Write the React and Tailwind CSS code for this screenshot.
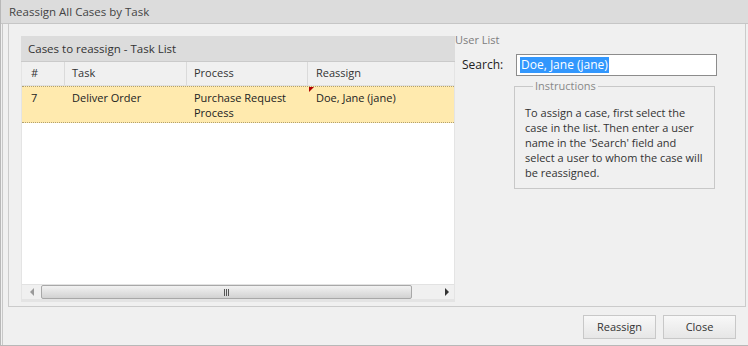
import React from 'react';

const cols = [
  { key: 'num', label: '#', w: 'w-[43px]', pl: 'pl-[9px]' },
  { key: 'task', label: 'Task', w: 'w-[122px]', pl: 'pl-[7px]' },
  { key: 'process', label: 'Process', w: 'w-[121px]', pl: 'pl-[7px]' },
  { key: 'reassign', label: 'Reassign', w: 'flex-1', pl: 'pl-[8px]' },
];

function ScrollBar() {
  return (
    <div className="h-[15px] flex items-center bg-[#f0f0f0] border-t border-[#e2e2e2]">
      <div className="w-[19px] flex justify-center">
        <div className="w-0 h-0 border-y-[4px] border-y-transparent border-r-[4px] border-r-[#9a9a9a]" />
      </div>
      <div className="w-[371px] h-[14px] rounded-[2px] border border-[#a8a8a8] bg-gradient-to-b from-[#f2f2f2] via-[#e2e2e2] to-[#d2d2d2] flex items-center justify-center">
        <div className="flex gap-[1px]">
          <div className="w-[1px] h-[7px] bg-[#555]" />
          <div className="w-[1px] h-[7px] bg-[#555]" />
          <div className="w-[1px] h-[7px] bg-[#555]" />
        </div>
      </div>
      <div className="flex-1 flex justify-end pr-[5px]">
        <div className="w-0 h-0 border-y-[4px] border-y-transparent border-l-[4px] border-l-[#333]" />
      </div>
    </div>
  );
}

function TaskGrid() {
  return (
    <div className="w-[434px] h-[266px] flex flex-col bg-[#e4e4e4]">
      <div className="h-[26px] bg-[#dcdcdc] border-b border-[#cacaca] flex items-center pl-[7px] text-[11.5px] text-[#333]">
        Cases to reassign - Task List
      </div>
      <div className="flex-1 flex flex-col mx-[1px] mb-[3px] bg-white">
        <div className="h-[24px] flex bg-[#f0f0f0] border-b border-[#e0e0e0]">
          {cols.map((c, i) => (
            <div
              key={c.key}
              className={`${c.w} ${c.pl} flex items-center text-[#333] ${i < 3 ? 'border-r border-[#dadada]' : ''}`}
            >
              {c.label}
            </div>
          ))}
        </div>
        <div className="h-[37px] flex bg-[#ffeaae] border-y border-dotted border-[#b0a070] text-[#222] leading-[15px]">
          <div className="w-[43px] pl-[9px] pt-[3px]">7</div>
          <div className="w-[122px] pl-[7px] pt-[3px]">Deliver Order</div>
          <div className="w-[121px] pl-[7px] pt-[3px]">Purchase Request<br />Process</div>
          <div className="flex-1 pl-[8px] pt-[3px] relative">
            <div className="absolute left-[1px] top-0 w-0 h-0 border-t-[5px] border-t-[#b00000] border-r-[5px] border-r-transparent" />
            Doe, Jane (jane)
          </div>
        </div>
        <div className="flex-1" />
        <ScrollBar />
      </div>
    </div>
  );
}

function UserList() {
  return (
    <div className="flex-1 flex flex-col">
      <div className="text-[11px] text-[#7d7d7d] leading-[14px] -mt-[3px]">User List</div>
      <div className="flex items-center mt-[7px] pl-[7px]">
        <span className="w-[54px] text-[#222] text-[12px]">Search:</span>
        <div className="w-[201px] h-[22px] border border-[#8c8c8c] bg-white flex items-center pl-[3px]">
          <span className="bg-[#3297fd] text-white text-[12px] px-[1px] leading-[16px]">Doe, Jane (jane)</span>
        </div>
      </div>
      <fieldset className="ml-[59px] mt-[2px] w-[201px] h-[111px] border border-[#c8c8c8] px-[10px] pt-[10px]">
        <legend className="ml-[8px] px-[2px] text-[#888] text-[11px]">Instructions</legend>
        <p className="text-[#333] text-[11px] leading-[15px]">
          To assign a case, first select the case in the list. Then enter a user name in the 'Search' field and select a user to whom the case will be reassigned.
        </p>
      </fieldset>
    </div>
  );
}

export default function App() {
  return (
    <div className="w-[748px] h-[346px] bg-[#f0f0f0] flex flex-col text-[11px] font-['Open_Sans',sans-serif] border-l border-b border-[#b8b8b8]">
      <div className="h-[24px] bg-[#dcdcdc] border-b border-[#c6c6c6] flex items-center pl-[8px] text-[11.5px] text-[#444]">
        Reassign All Cases by Task
      </div>
      <div className="flex-1 flex flex-col ml-[1px] border-l border-[#c8c8c8]">
        <div className="ml-[5px] mr-[2px] h-[283px] border border-[#cbcbcb] border-t-0 flex pl-[12px] pt-[12px]">
          <TaskGrid />
          <UserList />
        </div>
        <div className="flex-1 flex justify-end items-start gap-[7px] pt-[8px] pr-[12px]">
          <button className="w-[73px] h-[24px] border border-[#c8c8c8] bg-gradient-to-b from-[#f8f8f8] to-[#e6e6e6] text-[#333] text-[11px]">
            Reassign
          </button>
          <button className="w-[73px] h-[24px] border border-[#c8c8c8] bg-gradient-to-b from-[#f8f8f8] to-[#e6e6e6] text-[#333] text-[11px]">
            Close
          </button>
        </div>
      </div>
    </div>
  );
}
